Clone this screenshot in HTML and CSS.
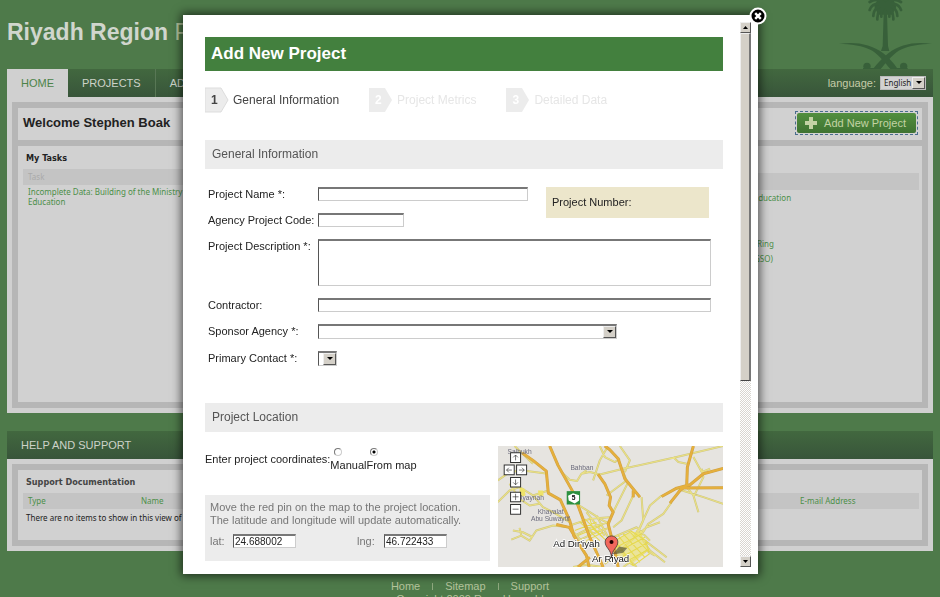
FILE: index.html
```html
<!DOCTYPE html>
<html lang="en">
<head>
<meta charset="utf-8">
<title>Riyadh Region Projects</title>
<link rel="stylesheet" href="styles.css">
</head>
<body>
<div class="page">
  <header class="masthead">
    <h1 class="brand">Riyadh Region <span class="brand-light">Projects</span></h1>
    <svg class="emblem" viewBox="0 0 294 207" aria-hidden="true">
      <g fill="#38603a">
        <path d="M146 40L156 40L159 138L163 153L138 153L143 138Z"/>
        <path d="M12 132C60 124 108 132 145 160C160 172 175 188 188 207L166 207C150 188 135 168 112 152C84 137 46 132 12 132Z"/>
        <path d="M291 132C243 124 195 132 160 160C144 172 130 188 114 207L137 207C153 188 168 168 191 152C219 137 257 132 291 132Z"/>
        <circle cx="96" cy="199" r="11"/><circle cx="206" cy="199" r="11"/>
        <path d="M84 204H120V207H84ZM182 204H218V207H182Z"/>
        <path d="M128 -4H174L184 20L172 44H130L118 20Z"/>
      </g>
      <g fill="none" stroke="#38603a" stroke-width="8" stroke-linecap="round">
        <path d="M151 12C136 -2 120 -4 104 6M151 12C166 -2 182 -4 198 6M151 14C130 6 110 12 104 30M151 14C172 6 192 12 198 30M151 16C132 12 116 26 115 48M151 16C170 12 186 26 187 48M151 18C138 20 126 34 127 58M151 18C164 20 176 34 175 58M151 18C142 26 138 36 139 50M151 18C160 26 164 36 163 50"/>
      </g>
    </svg>
  </header>

  <nav class="bar nav">
    <a class="tab tab-on" href="#">HOME</a>
    <a class="tab" href="#">PROJECTS</a>
    <a class="tab" href="#">ADMIN</a>
    <div class="lang">
      <label for="lang">language:</label>
      <span class="pick pick-lang"><select id="lang"><option>English</option></select></span>
    </div>
  </nav>

  <main class="frame">
    <div class="frame-in">
      <section class="card welcome">
        <h2>Welcome Stephen Boak</h2>
        <button class="add" type="button"><span class="add-in"><svg viewBox="0 0 12 12" aria-hidden="true"><path d="M4 0H8V4H12V8H8V12H4V8H0V4H4Z" fill="#c3d3a4"/></svg>Add New Project</span></button>
      </section>
      <section class="card board">
        <div>
          <h3>My Tasks</h3>
          <table class="tasks">
            <tr><th scope="col">Task</th></tr>
            <tr><td><a href="#">Incomplete Data: Building of the Ministry of Education</a></td></tr>
          </table>
        </div>
        <div class="updates">
          <div class="updates-head"></div>
          <ul>
            <li><a href="#">Ministry of Education</a></li>
            <li><a href="#">The Second Ring</a></li>
            <li><a href="#">Standards (GSO)</a></li>
          </ul>
        </div>
      </section>
    </div>
  </main>

  <h2 class="bar help">HELP AND SUPPORT</h2>
  <section class="frame">
    <div class="frame-in">
      <div class="card docs">
        <h3>Support Documentation</h3>
        <table>
          <tr><th scope="col" class="c-type">Type</th><th scope="col" class="c-name">Name</th><th scope="col">E-mail Address</th></tr>
          <tr><td colspan="3">There are no items to show in this view of the list.</td></tr>
        </table>
      </div>
    </div>
  </section>

  <footer class="foot">
    <div class="links"><a href="#">Home</a><i></i><a href="#">Sitemap</a><i></i><a href="#">Support</a></div>
    <div>Copyright 2009 Roya Hannahl</div>
  </footer>
</div>

<div class="overlay">
  <div class="modal" role="dialog" aria-labelledby="dlg">
    <button class="close" type="button" aria-label="Close"><svg viewBox="0 0 18 18"><circle cx="9" cy="9" r="7.5" fill="#000" stroke="#fff" stroke-width="2"/><path d="M6.2 6.2L11.8 11.8M11.8 6.2L6.200 11.8" stroke="#fff" stroke-width="2.4"/></svg></button>
    <form class="body">
      <h2 class="title" id="dlg">Add New Project</h2>
      <ol class="steps">
        <li class="on"><span class="num"><svg viewBox="0 0 24 26" aria-hidden="true"><path d="M0 1H16L23 13L16 25H0Z"/></svg><b>1</b></span>General Information</li>
        <li><span class="num"><svg viewBox="0 0 24 26" aria-hidden="true"><path d="M0 1H16L23 13L16 25H0Z"/></svg><b>2</b></span>Project Metrics</li>
        <li><span class="num"><svg viewBox="0 0 24 26" aria-hidden="true"><path d="M0 1H16L23 13L16 25H0Z"/></svg><b>3</b></span>Detailed Data</li>
      </ol>
      <h3 class="section">General Information</h3>
      <div class="fields">
        <label for="name">Project Name *:</label><input id="name" type="text">
        <div class="number">Project Number:</div>
        <label for="code">Agency Project Code:</label><input id="code" class="short" type="text">
        <label for="desc">Project Description *:</label><textarea id="desc" class="wide"></textarea>
        <label for="contractor">Contractor:</label><input id="contractor" class="wide" type="text">
        <label for="sponsor">Sponsor Agency *:</label><span class="pick pick-sponsor"><select id="sponsor"><option></option></select></span>
        <label for="contact">Primary Contact *:</label><span class="pick pick-contact"><select id="contact"><option></option></select></span>
      </div>
      <h3 class="section">Project Location</h3>
      <div class="location">
        <div>
          <div class="coords" role="radiogroup" aria-labelledby="cl">
            <span id="cl">Enter project coordinates:</span>
            <label><input type="radio" name="src">Manual</label>
            <label><input type="radio" name="src" checked>From map</label>
          </div>
          <div class="pin">
            <p>Move the red pin on the map to the project location.<br>The latitude and longitude will update automatically.</p>
            <div class="latlng">
              <label for="lat">lat:</label><input id="lat" type="text" value="24.688002">
              <label for="lng" class="lng">lng:</label><input id="lng" type="text" value="46.722433">
            </div>
          </div>
        </div>
        <svg class="map" viewBox="25 17 674 362" preserveAspectRatio="xMidYMid slice" role="img" aria-label="Map of Riyadh">
          <rect x="25" y="17" width="674" height="362" fill="#e6e4e0"/>
          <g fill="none" stroke="#cdc582" stroke-width="6" stroke-linejoin="round">
            <path id="r1" d="M25 120L60 95L100 90L175 100M25 185L60 150L90 140L130 165L176 150M60 130L90 175L120 195L150 190M75 17L130 70M215 95L240 118L262 122L275 100L300 95L330 102L400 85L560 50L699 17M275 100L290 90M330 17L345 50L375 65L390 55M310 120L330 60L350 25M390 17L420 60L405 95M400 95L410 120L350 165M415 125L370 215M430 165L395 240L370 260M455 170L460 240L440 285M515 165L480 195L450 260L430 290M545 185L520 220L475 250L450 290M560 145L640 170L699 190M590 140L610 165L625 215M635 85L640 110L610 170M550 50L565 65L590 70M610 50L635 95L660 85M130 165L160 200L190 215L240 245M65 297L95 285L120 300L140 270L190 255L240 260M70 270L100 275L130 290M95 285L90 262M245 180L300 215L340 240L360 250M240 255L300 235L360 230M255 285L300 262L355 245M265 300L330 270L360 262M275 240L310 280M290 215L345 285M320 225L355 290M240 262L275 300L330 320M345 370L390 330L470 260L510 245M370 290L440 260L480 300M380 320L440 379M440 270L480 330L525 365M465 300L530 350M400 379L470 330L495 345M250 379L290 372L340 379"/>
          </g>
          <g fill="none" stroke="#ece283" stroke-width="3"><use href="#r1"/></g>
          <path d="M375 300L425 272L455 278L475 330L430 368L375 340Z" fill="#efe56b" opacity=".6"/>
          <g stroke="#e6d94e" stroke-width="3" fill="none">
            <path d="M375 300L425 272L468 300L478 340L430 375L375 340ZM385 285L450 365M400 280L465 350M418 272L478 335M375 300L430 372M380 320L455 280M382 335L465 290M395 350L475 305M410 362L478 325M270 245L330 300M285 235L340 290M255 270L320 245M265 285L335 255M290 300L340 275M300 235L310 265L350 300"/>
          </g>
          <path d="M90 140L105 145L108 165L90 170ZM145 150L160 150L162 165L148 168Z" fill="#eee36a"/>
          <g fill="none" stroke="#cda046" stroke-width="9" stroke-linejoin="round">
            <path id="r2" d="M98 38L130 60L170 92L176 158L212 178L240 240L252 285L290 345L298 379M180 17L205 75L250 155L300 290L340 379M345 17L360 28L385 55L405 115L450 170M325 102L345 130L362 170L358 195L370 215L355 250L370 310L385 379M515 168L560 143L600 133L640 100L699 84M570 143L699 142M610 17L592 80L590 135L570 150L540 188M200 252L245 262M240 262L262 300M430 150V170M265 379L300 350"/>
          </g>
          <g fill="none" stroke="#e6b03c" stroke-width="6"><use href="#r2"/></g>
          <path d="M231 152H271V192H231Z" fill="#2d9140"/><path d="M235 166L250 158L268 164V180L255 189L237 180Z" fill="#fff"/>
          <text x="246" y="180" class="shield">5</text>
          <g class="place">
            <text x="54" y="40">Salbukh</text><text x="242" y="90">Bahban</text><text x="84" y="180">Uyaynah</text>
            <text x="144" y="219">Khayalat</text><text x="124" y="240">Abu Suwaytif</text>
          </g>
          <path d="M366 342L388 318L412 322L400 336Z" fill="#333" opacity=".55"/>
          <g class="city"><text x="191" y="320">Ad Dir'iyah</text><text x="307" y="363">Ar Riyad</text></g>
          <path d="M365 352C364 325 346 322 346 304A19 18 0 0 1 384 304C384 322 366 325 365 352Z" fill="#f2675d" stroke="#222" stroke-width="2"/>
          <circle cx="365" cy="304" r="6" fill="#200"/>
          <g fill="#fff" stroke="#333" stroke-width="3">
            <path d="M63 37H93V66H63ZM44 74H74V103H44ZM81 74H111V103H81ZM63 111H93V140H63ZM63 155H93V184H63ZM63 192H93V221H63Z"/>
            <path d="M78 60V44M71 51L78 44L85 51M67 89H51M58 82L51 89L58 96M88 89H104M97 82L104 89L97 96M78 117V133M71 126L78 133L85 126M69 169H87M78 160V179M69 206H87" fill="none" stroke-width="2"/>
          </g>
        </svg>
      </div>
    </form>
    <div class="scroll" aria-hidden="true">
      <span class="knob"><svg viewBox="0 0 7 4"><path d="M0 4L3.500 0L7 4Z"/></svg></span>
      <span class="thumb"></span>
      <span class="track"></span>
      <span class="knob"><svg viewBox="0 0 7 4"><path d="M0 0L3.500 4L7 0Z"/></svg></span>
    </div>
  </div>
</div>
</body>
</html>
```
FILE: styles.css
```css
* { box-sizing: border-box; }
html, body { height: 100%; }
body {
  margin: 0;
  overflow: hidden;
  background: #4e7a4a;
  font: 11px/14px "Liberation Sans", Arial, sans-serif;
  color: #222;
}
h1, h2, h3, p, ul, ol { margin: 0; padding: 0; list-style: none; font-weight: normal; }
a { color: inherit; text-decoration: none; }
button { border: 0; padding: 0; background: none; font: inherit; color: inherit; }
svg { display: block; }

.page { padding: 0 7px; }
.masthead { display: flex; justify-content: space-between; height: 69px; overflow: hidden; }
.brand { padding-top: 18px; font-size: 23px; line-height: 28px; font-weight: bold; color: #d0d6cd; white-space: nowrap; }
.brand-light { font-weight: normal; color: #b5c49c; }
.emblem { width: 98px; height: 69px; }

.bar { background: linear-gradient(#42683f, #38553a); color: #cdd3c9; }
.nav { display: flex; height: 28px; }
.tab { padding: 0 14px; line-height: 28px; border-right: 1px solid #587755; }
.tab-on { background: #d0d0d0; color: #4c8348; border: 0; }
.lang { display: flex; align-items: center; gap: 4px; margin-left: auto; padding-right: 7px; color: #c5cba8; }

.pick { position: relative; display: block; height: 15px; background: #fff; border: 1px solid #ccc; border-top: 2px solid #777; border-left: 1px solid #555; }
.pick select { display: block; width: 100%; height: 100%; margin: 0; padding: 0; border: 0; background: none; appearance: none; font: inherit; color: inherit; }
.pick::before { content: ""; position: absolute; top: 0; right: 0; bottom: 0; width: 11px; background: #d4d0c8; border: 1px solid #eee; border-right-color: #555; border-bottom-color: #555; }
.pick::after { content: ""; position: absolute; top: 4px; right: 3px; border: 3px solid transparent; border-top-color: #000; border-bottom: 0; }
.pick-lang { width: 46px; height: 14px; background: #d2d2d2; border: 1px solid #bbb; font: 8px/12px "Noto Sans", Tahoma, sans-serif; color: #222; }
.pick-lang select { padding-left: 3px; }

.frame { padding: 5px; background: #d0d0d0; }
.frame-in { display: grid; gap: 6px; padding: 6px; background: #b6b6b6; }
.card { background: #d1d1d1; }
.welcome { display: flex; align-items: center; justify-content: space-between; height: 32px; padding: 0 4px 2px 5px; }
.welcome h2 { font-size: 13px; font-weight: bold; }
.add { padding: 1px; border: 1px dashed #4a6d8e; }
.add-in { display: flex; align-items: center; gap: 7px; height: 20px; padding: 0 10px 0 8px; border-radius: 2px; background: linear-gradient(#528f3f, #3f7332); color: #c3d3a4; }
.add svg { width: 12px; height: 12px; }
.board { display: grid; grid-template-columns: 190fr 713fr; height: 256px; padding: 5px 3px 0 5px; font: 8px/10px "Noto Sans", Tahoma, sans-serif; color: #4c8f48; }
h3 { font: bold 9px/14px "DejaVu Sans Condensed", Tahoma, sans-serif; color: #222; }
.board h3 { padding: 0 3px; }
table { width: 100%; border-spacing: 0; }
th, td { padding: 0; text-align: left; font-weight: normal; }
th { height: 16px; padding: 0 5px; background: #c4c4c4; }
.tasks { margin-top: 4px; }
.tasks th { color: #aaa; }
.tasks td { padding: 2px 5px; }
.updates-head { height: 17px; margin-top: 22px; background: #c4c4c4; }
.updates ul { padding-left: 500px; }
.updates li { height: 15px; line-height: 15px; white-space: nowrap; }
.updates li:first-child { height: 46px; }

.help { height: 28px; margin-top: 18px; padding: 0 14px; font-size: 11px; line-height: 28px; }
.docs { height: 70px; padding: 5px 3px 0 5px; font: 8px/10px "Noto Sans", Tahoma, sans-serif; }
.docs h3 { padding: 0 3px 4px; color: #444; }
.docs th { color: #4c8f48; }
.docs td { padding: 4px 3px; }
.c-type { width: 113px; }
.c-name { width: 659px; }

.foot { padding-top: 29px; text-align: center; line-height: 13px; color: #b5c49c; }
.links { display: flex; justify-content: center; gap: 12px; }
.links i { width: 1px; height: 7px; margin-top: 3px; background: #8fa97f; }

.overlay { position: fixed; inset: 0; display: flex; padding: 15px 182px 23px 183px; }
.modal { position: relative; flex: 1; display: flex; min-width: 0; padding: 7px; background: #fff; box-shadow: 0 0 9px 2px rgba(0, 0, 0, .6); }
.close { position: absolute; top: -8px; right: -9px; width: 18px; height: 18px; }
.body { flex: 1; min-width: 0; overflow: hidden; padding: 15px 17px 0 15px; }
.title { height: 34px; padding-left: 6px; background: #43803e; color: #fff; font-size: 17px; font-weight: bold; line-height: 34px; }
.steps { display: flex; gap: 30px; margin: 16px 0 27px; font-size: 12px; color: #e6e6e6; }
.steps li { display: flex; align-items: center; gap: 4px; white-space: nowrap; }
.steps .on { color: #444; }
.num { display: grid; width: 24px; height: 26px; fill: #ececec; color: #fff; }
.num > * { grid-area: 1 / 1; }
.num b { padding-left: 6px; line-height: 26px; }
.on .num { stroke: #ddd; color: #444; }
.section { height: 29px; padding-left: 7px; background: #ececec; color: #555; font: 12px/29px "Liberation Sans", Arial, sans-serif; }
.fields { display: grid; grid-template-columns: 110px 1fr 18px 165px; gap: 12px 0; padding: 18px 12px 37px 3px; }
.fields label { grid-column: 1; line-height: 14px; white-space: nowrap; }
.number { grid-column: 4; grid-row: 1 / 3; height: 31px; margin-right: 2px; padding-left: 6px; background: #ece6cb; line-height: 31px; }
input[type="text"], textarea { display: block; width: 100%; height: 14px; margin: 0; padding: 0 1px; background: #fff; border: 1px solid #ccc; border-top: 2px solid #777; border-left: 1px solid #555; border-radius: 0; resize: none; font: 10px/11px "Liberation Sans", Arial, sans-serif; color: #222; }
.fields > input { grid-column: 2; }
.fields > .short { width: 86px; }
.fields > .wide { grid-column: 2 / 5; }
.fields > textarea { height: 47px; }
.pick-sponsor { grid-column: 2 / 5; width: 76%; }
.pick-contact { grid-column: 2; width: 19px; }
.location { display: grid; grid-template-columns: 1fr 225px; gap: 8px; padding-top: 14px; }
.coords { display: flex; align-items: center; height: 26px; }
.coords label { display: flex; flex-direction: column; justify-content: space-between; height: 26px; padding-top: 2px; }
.coords input { width: 8px; height: 8px; margin: 0 0 0 4px; appearance: none; border: 1px solid #777; border-right-color: #ccc; border-bottom-color: #ccc; border-radius: 50%; background: #fff; }
.coords input:checked { background: radial-gradient(circle, #000 0 1px, #fff 2px); }
.pin { height: 66px; margin-top: 23px; padding: 6px 5px; background: #ececec; color: #777; }
.pin p { line-height: 13px; white-space: nowrap; }
.latlng { display: flex; margin-top: 7px; }
.latlng label { width: 23px; }
.latlng .lng { width: 27px; margin-left: 61px; }
.latlng input { width: 63px; }
.map { width: 100%; height: 121px; }
.map text { font-family: "Liberation Sans", Arial, sans-serif; }
.place { font-size: 20px; fill: #6b6b7c; }
.city { font-size: 29px; fill: #111; stroke: #fff; stroke-width: 5px; paint-order: stroke; }
.shield { font-size: 20px; font-weight: bold; }

.scroll { display: flex; flex-direction: column; width: 11px; }
.knob { display: grid; place-items: center; flex: 0 0 11px; background: #d4d0c8; border: 1px solid #eee; border-right-color: #555; border-bottom-color: #555; }
.knob svg { width: 5px; height: 3px; }
.thumb { flex: 347; background: #d4d0c8; border: 1px solid #eee; border-right: 2px solid #777; border-bottom-color: #444; }
.track { flex: 176; background: repeating-conic-gradient(#fff 0 25%, #d9d6d0 0 50%) 0 0 / 2px 2px; }
```
